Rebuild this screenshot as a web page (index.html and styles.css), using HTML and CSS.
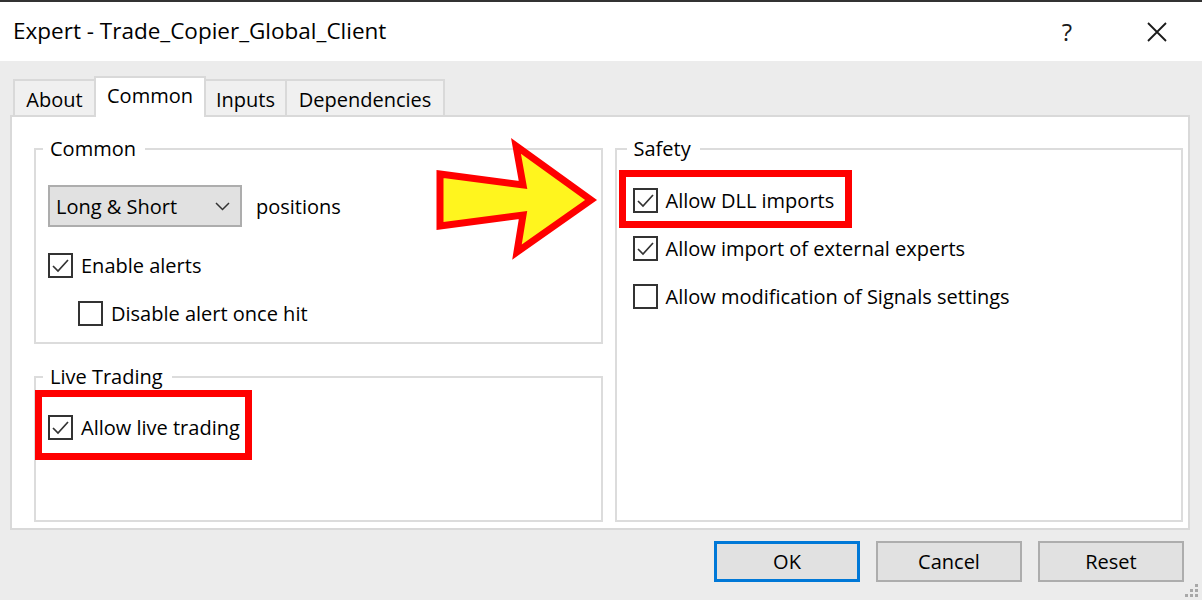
FILE: index.html
```html
<!DOCTYPE html>
<html lang="en">

<head>
  <meta charset="UTF-8">
  <meta name="viewport" content="width=device-width, initial-scale=1.0">
  <title>Expert - Trade_Copier_Global_Client</title>
  <link rel="stylesheet" href="styles.css">
</head>

<body>
  <div class="dialog">
    <div class="titlebar">
      <span class="title">Expert - Trade_Copier_Global_Client</span>
      <span class="title-btn help">?</span>
      <span class="title-btn close">
        <svg width="20" height="20" viewBox="0 0 20 20">
          <path d="M1 1 L19 19 M19 1 L1 19" stroke="#1a1a1a" stroke-width="1.8" fill="none" />
        </svg>
      </span>
    </div>

    <div class="main">
      <div class="tabs">
        <div class="tab tab-about">About</div>
        <div class="tab tab-common active">Common</div>
        <div class="tab tab-inputs">Inputs</div>
        <div class="tab tab-deps">Dependencies</div>
      </div>

      <div class="panel">
        <div class="column">
          <fieldset class="group">
            <legend>Common</legend>
            <div class="group-body common-body">
              <div class="select-row">
                <div class="select">
                  <span>Long &amp; Short</span>
                  <svg width="15" height="9" viewBox="0 0 15 9">
                    <path d="M1 1 L7.5 7.5 L14 1" stroke="#333" stroke-width="1.5" fill="none" />
                  </svg>
                </div>
                <span class="select-note">positions</span>
              </div>
              <div class="check">
                <span class="box checked"><svg viewBox="0 0 21 21"><path d="M3 11 L8 16 L18 5" /></svg></span>
                <span>Enable alerts</span>
              </div>
              <div class="check indent">
                <span class="box"></span>
                <span>Disable alert once hit</span>
              </div>
            </div>
          </fieldset>

          <fieldset class="group live">
            <legend>Live Trading</legend>
            <div class="group-body live-body">
              <div class="check mark mark-live">
                <span class="box checked"><svg viewBox="0 0 21 21"><path d="M3 11 L8 16 L18 5" /></svg></span>
                <span>Allow live trading</span>
              </div>
            </div>
          </fieldset>
        </div>

        <fieldset class="group safety">
          <legend>Safety</legend>
          <div class="group-body safety-body">
            <div class="check mark mark-dll">
              <span class="box checked"><svg viewBox="0 0 21 21"><path d="M3 11 L8 16 L18 5" /></svg></span>
              <span>Allow DLL imports</span>
            </div>
            <div class="check">
              <span class="box checked"><svg viewBox="0 0 21 21"><path d="M3 11 L8 16 L18 5" /></svg></span>
              <span>Allow import of external experts</span>
            </div>
            <div class="check">
              <span class="box"></span>
              <span>Allow modification of Signals settings</span>
            </div>
          </div>
        </fieldset>
      </div>

      <div class="buttons">
        <button class="btn btn-default">OK</button>
        <button class="btn">Cancel</button>
        <button class="btn">Reset</button>
      </div>
    </div>

    <!-- annotation arrow pointing at the DLL option -->
    <svg class="arrow" width="175" height="132" viewBox="430 132 175 132">
      <polygon points="440,174 523,185 516,146 591,200 517,252 523,215 440,226"
        fill="#fff51e" stroke="#f00" stroke-width="7" stroke-linejoin="miter" />
    </svg>

    <svg class="grip" width="14" height="14" viewBox="0 0 14 14">
      <rect x="10" y="0" width="3" height="3" fill="#a8a8a8" />
      <rect x="5" y="5" width="3" height="3" fill="#a8a8a8" />
      <rect x="10" y="5" width="3" height="3" fill="#a8a8a8" />
      <rect x="0" y="10" width="3" height="3" fill="#a8a8a8" />
      <rect x="5" y="10" width="3" height="3" fill="#a8a8a8" />
      <rect x="10" y="10" width="3" height="3" fill="#a8a8a8" />
    </svg>
  </div>
</body>

</html>
```

FILE: styles.css
```css
body {
  margin: 0;
  background-color: #ececec;
  font-family: "Open Sans", "Noto Sans", sans-serif;
  font-size: 20px;
  color: #000;
  overflow: hidden;
}

.dialog {
  position: relative;
  width: 1202px;
  height: 600px;
  box-sizing: border-box;
  border-top: 2px solid #333;
}

/* title bar */
.titlebar {
  display: flex;
  align-items: center;
  height: 59px;
  padding-left: 13px;
  background: #fff;
}

.title {
  flex: 1;
  font-size: 22.5px;
  margin-top: -2px;
}

.title-btn {
  display: flex;
  justify-content: center;
  align-items: center;
  width: 90px;
  height: 100%;
}

.help {
  font-size: 24px;
  color: #1a1a1a;
}

/* tabs */
.main {
  padding: 15px 12px 0 10px;
}

.tabs {
  position: relative;
  z-index: 1;
  display: flex;
  align-items: flex-end;
  height: 39px;
  padding-left: 3px;
}

.tab {
  display: flex;
  justify-content: center;
  align-items: center;
  height: 36px;
  box-sizing: border-box;
  border: 2px solid #d9d9d9;
  border-bottom: none;
  background: #f0f0f0;
  padding-top: 2px;
}

.tab + .tab {
  margin-left: -2px;
}

.tab.active {
  height: 41px;
  margin: 0 -2px -2px -2px;
  background: #fff;
  padding-top: 0;
  padding-bottom: 4px;
  z-index: 2;
}

.tab.active + .tab {
  margin-left: 0;
}

.tab-about { width: 83px; }
.tab-common { width: 112px; }
.tab-inputs { width: 83px; }
.tab-deps { width: 160px; }

/* panel */
.panel {
  display: grid;
  grid-template-columns: 1fr 1fr;
  column-gap: 12px;
  height: 415px;
  box-sizing: border-box;
  padding: 20px 5px 6px 22px;
  border: 2px solid #d9d9d9;
  background: #fff;
}

.column {
  display: flex;
  flex-direction: column;
}

.group {
  margin: 0;
  padding: 0;
  min-width: 0;
  border: 2px solid #dcdcdc;
}

.group legend {
  margin-left: 7px;
  padding: 0 9px 0 7px;
  line-height: 24px;
}

.group.safety legend {
  margin-left: 10px;
}

.group.live {
  flex: 1;
  margin-top: 21px;
}

.group-body {
  padding-left: 12px;
}

.common-body {
  padding-top: 24px;
  padding-bottom: 5px;
}

.live-body {
  padding-top: 14px;
}

.safety-body {
  padding-top: 15px;
  padding-left: 16px;
}

/* dropdown */
.select-row {
  display: flex;
  align-items: center;
  margin-bottom: 14px;
}

.select {
  display: flex;
  justify-content: space-between;
  align-items: center;
  width: 194px;
  height: 42px;
  box-sizing: border-box;
  padding: 0 10px 0 6px;
  border: 2px solid #adadad;
  background: #e1e1e1;
}

.select-note {
  margin-left: 14px;
}

/* checkboxes */
.check {
  display: flex;
  align-items: center;
  gap: 8px;
  width: fit-content;
  height: 48px;
}

.check.indent {
  margin-left: 30px;
}

.box {
  display: block;
  width: 25px;
  height: 25px;
  box-sizing: border-box;
  border: 2px solid #333;
  background: #fff;
}

.box svg {
  display: block;
  width: 21px;
  height: 21px;
  fill: none;
  stroke: #333;
  stroke-width: 1.7;
}

/* red highlight frames */
.mark {
  position: relative;
}

.mark::after {
  content: "";
  position: absolute;
  border: 7px solid #f00;
}

.mark-live::after {
  left: -13px;
  right: -12px;
  top: -13px;
  bottom: -9px;
}

.mark-dll::after {
  left: -14px;
  right: -18px;
  top: -6px;
  bottom: -4px;
}

/* buttons */
.buttons {
  display: flex;
  justify-content: flex-end;
  gap: 16px;
  padding: 11px 6px 0 0;
}

.btn {
  width: 146px;
  height: 41px;
  box-sizing: border-box;
  border: 2px solid #adadad;
  background: #e1e1e1;
  font: inherit;
  color: #000;
  padding: 0;
}

.btn-default {
  border: 3px solid #0078d7;
}

.arrow {
  position: absolute;
  left: 430px;
  top: 130px;
}

.grip {
  position: absolute;
  right: 3px;
  bottom: 2px;
}
```
